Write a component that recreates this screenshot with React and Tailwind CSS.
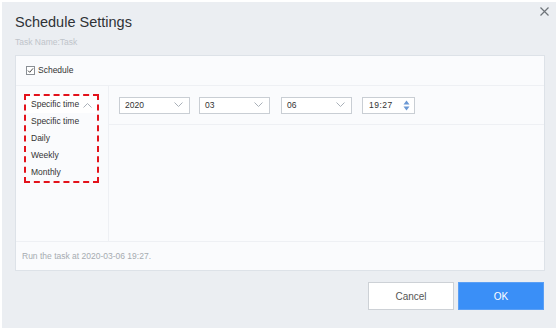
import React from 'react';

const font = "font-['Liberation_Sans',Arial,sans-serif]";

function Chevron({ up = false }) {
  return (
    <svg width="9" height="6" viewBox="0 0 9 6" fill="none" stroke="#a9b0b8" strokeWidth="1">
      {up ? <path d="M0.5 5.5 4.5 1.5 8.5 5.5" /> : <path d="M0.5 0.5 4.5 4.5 8.5 0.5" />}
    </svg>
  );
}

function Select({ value }) {
  return (
    <div className="w-[71px] h-[17px] flex items-center justify-between pl-[5px] pr-[6px] bg-white border border-[#c9ced4] text-[8.5px] text-[#333]">
      <span>{value}</span>
      <Chevron />
    </div>
  );
}

export default function App() {
  const options = ['Specific time', 'Daily', 'Weekly', 'Monthly'];

  return (
    <div className={`w-[560px] h-[330px] bg-white p-[2px] ${font}`}>
      <div className="w-[554px] h-[326px] bg-[#ebeef2] flex flex-col relative">
        {/* close */}
        <svg className="absolute right-[7px] top-[5px]" width="9" height="9" viewBox="0 0 9 9" stroke="#6f747a" strokeWidth="1.2">
          <path d="M0.5 0.5 8.5 8.5M8.5 0.5 0.5 8.5" />
        </svg>

        {/* Header */}
        <div className="pl-[13px] pt-[10px] text-[14.5px] leading-[20px] text-[#2f3236]">Schedule Settings</div>
        <div className="pl-[13px] mt-[4px] text-[8.5px] leading-[12px] text-[#bfc4ca]">Task Name:Task</div>

        {/* Panel */}
        <div className="ml-[13px] mt-[7px] w-[530px] h-[216px] bg-[#fafbfd] border border-[#dde2e8] flex flex-col">
          <div className="h-[30px] flex items-center pl-[10px] gap-[3px] border-b border-[#eef0f4]">
            <svg width="9" height="9" viewBox="0 0 9 9">
              <rect x="0.5" y="0.5" width="8" height="8" fill="#fff" stroke="#8a8f95" />
              <path d="M2 4.6 3.7 6.3 7 2.4" fill="none" stroke="#444" strokeWidth="1" />
            </svg>
            <span className="text-[8.5px] text-[#333]">Schedule</span>
          </div>

          <div className="flex-1 flex">
            {/* Left column */}
            <div className="w-[93px] border-r border-[#eef0f4] pl-[8px] pt-[8px]">
              <div className="w-[75px] border-2 border-dashed border-[#e3121b] flex flex-col text-[8.5px] text-[#333]">
                <div className="h-[17px] flex items-center justify-between pl-[5px] pr-[5px] bg-white">
                  <span>Specific time</span>
                  <Chevron up />
                </div>
                {options.map((o) => (
                  <div key={o} className="h-[17px] flex items-center pl-[5px]">
                    {o}
                  </div>
                ))}
              </div>
            </div>

            {/* Right column */}
            <div className="flex-1 flex flex-col">
              <div className="h-[39px] flex items-center pl-[10px] border-b border-[#eef0f4]">
                <Select value="2020" />
                <div className="ml-[9px]"><Select value="03" /></div>
                <div className="ml-[11px]"><Select value="06" /></div>
                <div className="ml-[10px] w-[53px] h-[17px] flex items-center justify-between pl-[6px] pr-[4px] bg-white border border-[#c9ced4] text-[8.5px] text-[#333]">
                  <span className="tracking-[0.5px]">19:27</span>
                  <svg width="7" height="11" viewBox="0 0 7 11" fill="#6b98d4">
                    <path d="M3.5 0.5 6.5 4.5H0.5Z" />
                    <path d="M3.5 10.5 6.5 6.5H0.5Z" />
                  </svg>
                </div>
              </div>
            </div>
          </div>

          <div className="h-[29px] flex items-center pl-[6px] border-t border-[#eef0f4] text-[8.5px] text-[#a6abb1]">
            Run the task at 2020-03-06 19:27.
          </div>
        </div>

        {/* Buttons */}
        <div className="mt-[11px] mr-[12px] flex justify-end gap-[4px]">
          <button className="w-[86px] h-[28px] bg-white border border-[#cdd1d6] text-[10px] text-[#555]">Cancel</button>
          <button className="w-[86px] h-[28px] bg-[#3a8ff7] border border-[#5a9ff5] text-[10px] text-white">OK</button>
        </div>
      </div>
    </div>
  );
}
